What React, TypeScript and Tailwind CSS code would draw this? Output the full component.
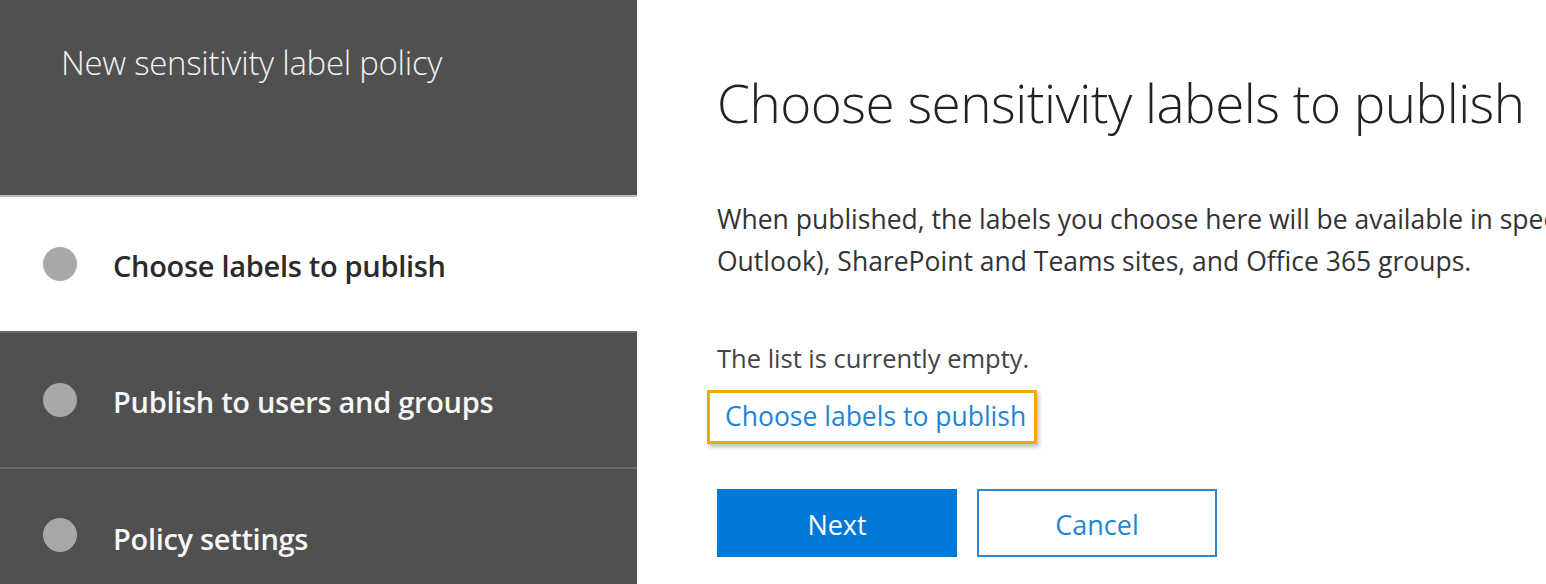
import React from "react";

const font = { fontFamily: '"Open Sans", "Noto Sans", sans-serif' };

function Step({ label, active, className }: { label: string; active?: boolean; className: string }) {
  return (
    <div className={`flex pl-[43px] ${className}`}>
      <div className="w-[34px] h-[34px] shrink-0 rounded-full bg-[#a8a8a8]" />
      <span
        className={`ml-[36px] pt-[4px] text-[29px] leading-[34px] font-semibold tracking-[-0.3px] ${active ? "text-[#2b2b2b]" : "text-[#f7f7f7]"}`}
      >
        {label}
      </span>
    </div>
  );
}

export default function App() {
  return (
    <div className="flex w-[1546px] h-[584px] overflow-hidden bg-white" style={font}>
      <aside className="w-[637px] shrink-0 flex flex-col">
        <div className="h-[197px] bg-[#505050] border-b-2 border-[#bdbdbd] pl-[61px] pt-[40px]">
          <h2 className="text-[33px] font-light text-[#f2f2f2] tracking-[-0.3px] leading-[46px]">
            New sensitivity label policy
          </h2>
        </div>
        <Step label="Choose labels to publish" active className="bg-white h-[134px] items-center" />
        <Step
          label="Publish to users and groups"
          className="h-[136px] bg-[#505050] border-t-2 border-[#6a6a6a] items-center"
        />
        <Step
          label="Policy settings"
          className="flex-1 bg-[#505050] border-t-2 border-[#6a6a6a] items-start pt-[49px]"
        />
      </aside>
      <main className="flex-1 min-w-0 overflow-hidden pl-[80px] pt-[68px]">
        <h1 className="text-[53px] font-light text-[#222] leading-[70px] whitespace-nowrap tracking-[-0.5px]">
          Choose sensitivity labels to publish
        </h1>
        <p className="mt-[60px] text-[26.5px] text-[#333] leading-[42px] whitespace-nowrap">
          When published, the labels you choose here will be available in specific apps (like
          <br />
          Outlook), SharePoint and Teams sites, and Office 365 groups.
        </p>
        <p className="mt-[56px] text-[25.5px] text-[#444] leading-[40px]">The list is currently empty.</p>
        <div className="mt-[12px] -ml-[10px] w-[330px] h-[54px] border-[3px] border-[#f6a800] shadow-[2px_3px_4px_rgba(0,0,0,0.25)] flex items-center pl-[15px]">
          <a className="text-[26.5px] text-[#1f84d6] whitespace-nowrap">Choose labels to publish</a>
        </div>
        <div className="mt-[45px] flex gap-[20px]">
          <button className="w-[240px] h-[68px] pt-[5px] bg-[#0078d7] text-white text-[27px]">Next</button>
          <button className="w-[240px] h-[68px] pt-[5px] border-2 border-[#2b88d8] bg-white text-[#1f84d6] text-[27px]">
            Cancel
          </button>
        </div>
      </main>
    </div>
  );
}
